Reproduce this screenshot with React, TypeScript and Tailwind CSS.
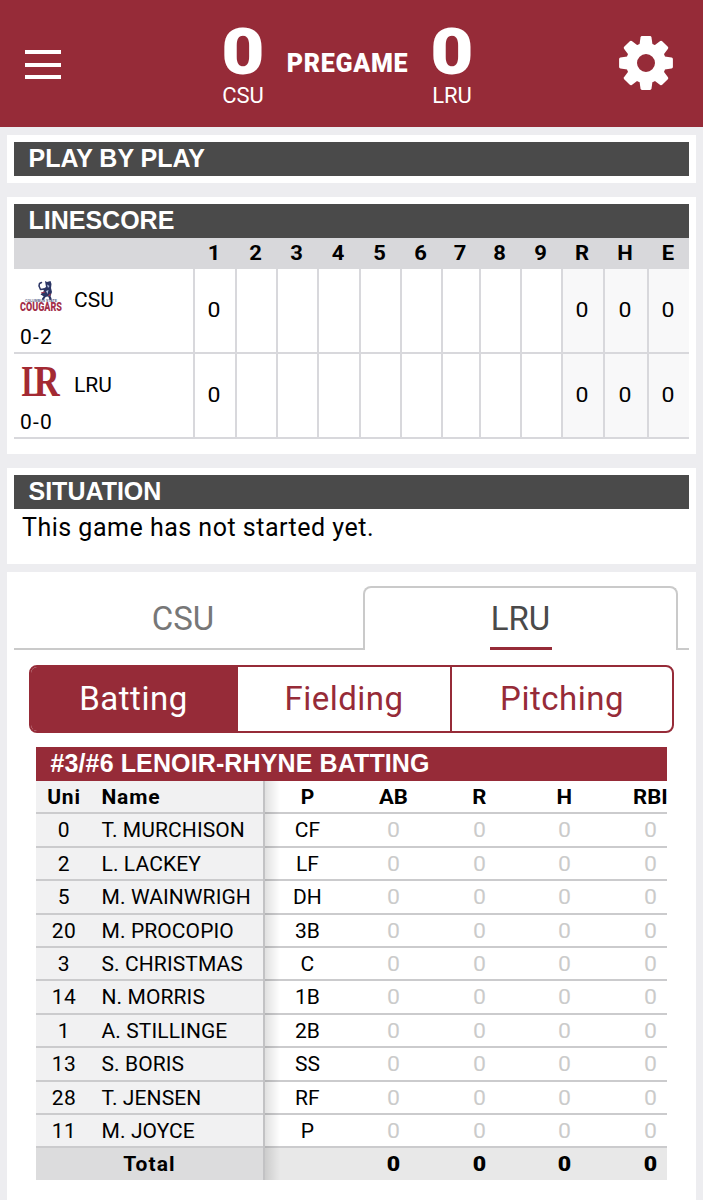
import { useState } from "react";

type Player = {
  uni: number;
  name: string;
  pos: string;
};

const players: Player[] = [
  { uni: 0, name: "T. MURCHISON", pos: "CF" },
  { uni: 2, name: "L. LACKEY", pos: "LF" },
  { uni: 5, name: "M. WAINWRIGH", pos: "DH" },
  { uni: 20, name: "M. PROCOPIO", pos: "3B" },
  { uni: 3, name: "S. CHRISTMAS", pos: "C" },
  { uni: 14, name: "N. MORRIS", pos: "1B" },
  { uni: 1, name: "A. STILLINGE", pos: "2B" },
  { uni: 13, name: "S. BORIS", pos: "SS" },
  { uni: 28, name: "T. JENSEN", pos: "RF" },
  { uni: 11, name: "M. JOYCE", pos: "P" },
];

const innings = ["1", "2", "3", "4", "5", "6", "7", "8", "9"];
const totals = ["R", "H", "E"];
const stats = ["AB", "R", "H", "RBI"];

const lineGrid = "grid grid-cols-[179px_42px_41px_41px_42px_41px_41px_38px_41px_41px_42px_44px_42px]";

function GearIcon() {
  return (
    <svg className="w-[54px] h-[54px]" viewBox="-27 -27 54 54" fill="#fff">
      {[0, 45, 90, 135, 180, 225, 270, 315].map((angle) => (
        <path
          key={angle}
          transform={`rotate(${angle})`}
          d="M-6.7 -17 L-5.5 -25.6 Q-5.2 -26.9 -4 -26.9 H4 Q5.2 -26.9 5.5 -25.6 L6.7 -17 Z"
        />
      ))}
      <circle r="14.5" fill="none" stroke="#fff" strokeWidth="11" />
    </svg>
  );
}

function CougarsLogo() {
  return (
    <svg className="w-[42px] h-[32px] overflow-visible" viewBox="0 0 42 32">
      <g fill="none" stroke="#2b3564" strokeLinecap="round" strokeLinejoin="round">
        <path d="M24 9 L20.500 9.500 L19 6 L19.500 3.500 L21.500 2.500" strokeWidth="1.500" />
        <path d="M23 14 L25 16 L23 19 M28.500 14 L30.500 19" strokeWidth="2.200" />
      </g>
      <path d="M25 1 L27 2 L30.500 1 L31.500 4 L31 8 L32 12 L30.500 16 L25 17 L20.500 14.500 L24 11 L23 9 L26 7 Z" fill="#2b3564" />
      <path d="M27 4.500 L29.500 6 L28 8 Z M26 11 L28.500 10 L27.500 14 Z" fill="#b9c5e4" />
      <path d="M21 13 L25 12 M28.500 16 L30.500 14" stroke="#a43650" strokeWidth="1.200" />
      <text x="5" y="21.500" fontFamily="Liberation Sans" fontWeight="700" fontSize="3.400" textLength="32" fill="#5a6286">
        COLUMBUS STATE
      </text>
      <text x="0" y="31" fontFamily="Roboto" fontWeight="900" fontSize="12.500" textLength="42" lengthAdjust="spacingAndGlyphs" fill="#a3304a">
        COUGARS
      </text>
    </svg>
  );
}

function LrLogo() {
  return (
    <svg
      className="w-[42px] h-[32px] overflow-visible"
      viewBox="0 0 42 32"
      fontFamily="Liberation Serif"
      fontWeight="700"
      fontSize="45"
      fill="#a32a33"
    >
      <text transform="translate(1.500 30.500) scale(0.680 1)">L</text>
      <text transform="translate(13.800 30.500) scale(0.800 1)">R</text>
    </svg>
  );
}

function Score({ team }: { team: string }) {
  return (
    <div className="w-[60px] flex flex-col items-center">
      <span className="h-[56px] scale-x-115 text-[65px] leading-[56px] font-black">0</span>
      <span className="mt-[3px] text-[22px] leading-[26px]">{team}</span>
    </div>
  );
}

function Heading({ title, className = "bg-[#4a4a4a]" }: { title: string; className?: string }) {
  return (
    <h2
      className={`h-[34px] pl-[14.5px] text-[25px] leading-[33px] font-bold text-white whitespace-nowrap font-['Liberation_Sans',sans-serif] ${className}`}
    >
      {title}
    </h2>
  );
}

function LineRow({ team, record, logo }: { team: string; record: string; logo: React.ReactNode }) {
  return (
    <div className={`${lineGrid} h-[85px] border-b-2 border-[#d8d8dc] text-[21px]`}>
      <div className="pl-[6px] pt-[11px]">
        <div className="flex gap-[12px]">
          {logo}
          <span className="pt-[7px] leading-[26px]">{team}</span>
        </div>
        <div className="mt-[11px] leading-[26px] tracking-[1.2px]">{record}</div>
      </div>
      {innings.map((inning) => (
        <div key={inning} className="flex items-center justify-center border-l-2 border-[#d8d8dc] pr-[2px]">
          <span className="scale-x-110">{inning === "1" ? "0" : ""}</span>
        </div>
      ))}
      {totals.map((total) => (
        <div key={total} className="flex items-center justify-center border-l-2 border-[#d8d8dc] bg-[#f8f8f9] pr-[2px]">
          <span className="scale-x-110">0</span>
        </div>
      ))}
    </div>
  );
}

function BattingTable() {
  return (
    <div className="ml-[22px] w-[631px] overflow-hidden">
      <Heading title="#3/#6 LENOIR-RHYNE BATTING" className="bg-[#962b38] tracking-[0.12px]" />
      <div className="flex text-[21px] leading-[33px]">
        <div className="w-[229px] shrink-0 border-r-2 border-[#c2c2c4] bg-[#f1f1f2]">
          <div className="flex h-[33.4px] border-b-2 border-[#cbcbcd] font-bold tracking-[0.8px]">
            <span className="w-[56px] text-center">Uni</span>
            <span className="pl-[9.5px]">Name</span>
          </div>
          {players.map((player) => (
            <div key={player.uni} className="flex h-[33.4px] border-b-2 border-[#cbcbcd]">
              <span className="w-[56px] text-center tracking-[0.5px]">{player.uni}</span>
              <span className="pl-[9.5px] whitespace-nowrap tracking-[0.1px]">{player.name}</span>
            </div>
          ))}
          <div className="h-[32px] bg-[#dcdcdd] text-center font-bold tracking-[1.1px]">Total</div>
        </div>
        <div className="relative shrink-0">
          <div className="absolute inset-y-0 left-0 w-[15px] bg-linear-to-r from-black/12 to-transparent" />
          <div className="grid grid-cols-[repeat(5,85.8px)] h-[33.4px] border-b-2 border-[#cbcbcd] text-center font-bold">
            <span className="-ml-px">P</span>
            {stats.map((stat) => (
              <span key={stat} className="-ml-px scale-x-105">{stat}</span>
            ))}
          </div>
          {players.map((player) => (
            <div
              key={player.uni}
              className="grid grid-cols-[repeat(5,85.8px)] h-[33.4px] border-b-2 border-[#cbcbcd] text-center"
            >
              <span className="-ml-px">{player.pos}</span>
              {stats.map((stat) => (
                <span key={stat} className="-ml-px scale-x-110 text-[#cbcbcb]">0</span>
              ))}
            </div>
          ))}
          <div className="grid grid-cols-[repeat(5,85.8px)] h-[32px] bg-[#e8e8e8] text-center font-black">
            <span></span>
            {stats.map((stat) => (
              <span key={stat} className="-ml-px scale-x-110">0</span>
            ))}
          </div>
        </div>
      </div>
    </div>
  );
}

function App() {
  const [view, setView] = useState("Batting");

  return (
    <div className="w-[703px] h-[1200px] overflow-hidden bg-[#ededf0] text-black font-['Roboto',sans-serif]">
      <header className="flex h-[127px] bg-[#962b38] text-white">
        <button className="ml-[25px] mt-[50px] flex h-[29px] w-[36px] flex-col justify-between">
          <span className="block h-[4px] w-full bg-white" />
          <span className="block h-[4px] w-full bg-white" />
          <span className="block h-[4px] w-full bg-white" />
        </button>
        <div className="ml-[152px] mt-[24px] flex">
          <Score team="CSU" />
          <div className="w-[149px] pt-[24px] text-center text-[25px] leading-[32px] font-black tracking-[0.7px]">
            PREGAME
          </div>
          <Score team="LRU" />
        </div>
        <button className="ml-[137px] mt-[36px] h-[54px]">
          <GearIcon />
        </button>
      </header>

      <main className="mx-[7px] mt-[8px]">
        <section className="h-[48px] bg-white px-[7px] pt-[7px]">
          <Heading title="PLAY BY PLAY" />
        </section>

        <section className="mt-[14px] h-[257px] bg-white px-[7px] pt-[7px]">
          <Heading title="LINESCORE" />
          <div className={`${lineGrid} h-[31px] bg-[#d8d8db] text-center text-[20px] leading-[30px] font-bold`}>
            <span></span>
            {[...innings, ...totals].map((label) => (
              <span key={label} className="scale-x-110">{label}</span>
            ))}
          </div>
          <LineRow team="CSU" record="0-2" logo={<CougarsLogo />} />
          <LineRow team="LRU" record="0-0" logo={<LrLogo />} />
        </section>

        <section className="mt-[14px] h-[96px] bg-white px-[7px] pt-[7px]">
          <Heading title="SITUATION" />
          <p className="pl-[8px] pt-[3px] text-[25px] leading-[32px] tracking-[0.5px]">This game has not started yet.</p>
        </section>

        <section className="mt-[8px] h-[628px] bg-white px-[7px] pt-[14px]">
          <div className="flex h-[64px] text-[33px]">
            <div className="w-[349px] border-b-2 border-[#cacaca] pr-[11px] text-center leading-[65px] text-[#777]">CSU</div>
            <div className="flex w-[315px] justify-center rounded-t-lg border-2 border-b-0 border-[#cacaca] leading-[62px] text-[#4a4a4a]">
              <span className="h-[62px] w-[62px] border-b-[3px] border-[#962b38] text-center">LRU</span>
            </div>
            <div className="w-[11px] border-b-2 border-[#cacaca]" />
          </div>

          <div className="ml-[15px] mt-[15px] flex h-[68px] w-[645px] overflow-hidden rounded-lg border-2 border-[#962b38] text-[33px] leading-[60px]">
            {["Batting", "Fielding", "Pitching"].map((tab, i) => (
              <button
                key={tab}
                onClick={() => setView(tab)}
                className={`tracking-[0.5px] ${i === 0 ? "w-[207px] pr-[2px]" : i === 1 ? "w-[212px]" : "w-[222px] border-l-2 border-[#962b38]"} ${
                  view === tab ? "bg-[#962b38] text-white" : "text-[#962b38]"
                }`}
              >
                {tab}
              </button>
            ))}
          </div>

          <div className="mt-[14px]">
            <BattingTable />
          </div>
        </section>
      </main>
    </div>
  );
}

export default App;
